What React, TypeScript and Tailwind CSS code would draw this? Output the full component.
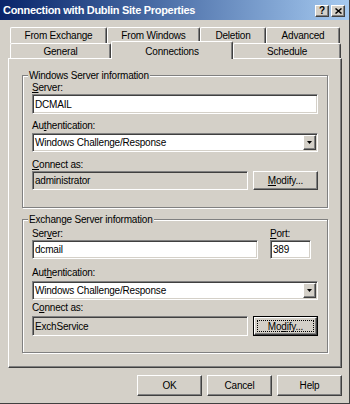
import React from "react";

const sunken =
  "border border-t-[#808080] border-l-[#808080] border-r-white border-b-white shadow-[inset_1px_1px_0_#404040,inset_-1px_-1px_0_#d4d0c8]";
const raised =
  "border border-t-white border-l-white border-r-[#404040] border-b-[#404040] shadow-[inset_-1px_-1px_0_#808080]";

function Acc({ text, at }: { text: string; at: number }) {
  return (
    <>
      {text.slice(0, at)}
      <span className="underline underline-offset-[1px]">{text[at]}</span>
      {text.slice(at + 1)}
    </>
  );
}

function Label({ children }: { children: React.ReactNode }) {
  return <div className="h-[13px] leading-[13px] whitespace-nowrap">{children}</div>;
}

function TextBox({ value, className }: { value: string; className: string }) {
  return (
    <div className={`${sunken} bg-white flex items-center pl-[2px] ${className}`}>
      {value}
    </div>
  );
}

function Combo({ className }: { className: string }) {
  return (
    <div className={`${sunken} bg-white flex items-center pl-[2px] pr-[1px] ${className}`}>
      <span className="flex-1">Windows Challenge/Response</span>
      <div className={`${raised} bg-[#d4d0c8] w-[13px] h-[15px] flex items-center justify-center`}>
        <svg width="5" height="3" viewBox="0 0 5 3">
          <path d="M0 0h5L2.5 3z" fill="#000" />
        </svg>
      </div>
    </div>
  );
}

function Button({ children, className }: { children: React.ReactNode; className: string }) {
  return (
    <div className={`${raised} bg-[#d4d0c8] flex items-center justify-center ${className}`}>
      {children}
    </div>
  );
}

function GroupBox({
  title,
  className,
  children,
}: {
  title: string;
  className: string;
  children: React.ReactNode;
}) {
  return (
    <div
      className={`relative border border-[#808080] shadow-[inset_1px_1px_0_white,1px_1px_0_white] px-[9px] ${className}`}
    >
      <span className="absolute -top-[7px] left-[5px] bg-[#d4d0c8] px-[1px] leading-[13px]">
        {title}
      </span>
      {children}
    </div>
  );
}

function Tab({ label, w }: { label: string; w: string }) {
  return (
    <div
      className={`${w} h-full border-t border-l border-white border-r border-r-[#404040] shadow-[inset_-1px_0_0_#808080] rounded-t-[2px] flex items-center justify-center`}
    >
      {label}
    </div>
  );
}

export default function App() {
  return (
    <div className="w-[350px] h-[404px] bg-[#d4d0c8] border-r border-b border-[#404040] overflow-hidden text-black font-['Liberation_Sans',Arial,sans-serif] text-[10px] tracking-[-0.2px]">
      {/* Title bar */}
      <div className="h-[20px] flex items-center bg-gradient-to-r from-[#0a246a] to-[#a6caf0] pl-[3px] pr-[4px]">
        <span className="flex-1 text-white font-bold text-[11px] tracking-[-0.3px]">
          Connection with Dublin Site Properties
        </span>
        <div className="flex gap-[2px] mt-[2px]">
          <div className={`${raised} bg-[#d4d0c8] w-[14px] h-[12px] flex items-center justify-center font-bold text-[10px] leading-none`}>
            ?
          </div>
          <div className={`${raised} bg-[#d4d0c8] w-[14px] h-[12px] flex items-center justify-center`}>
            <svg width="7" height="6" viewBox="0 0 7 6">
              <path d="M0.5 0.5l6 5M6.5 0.5l-6 5" stroke="#000" strokeWidth="1.5" />
            </svg>
          </div>
        </div>
      </div>

      <div className="pl-[8px] pt-[7px]">
        {/* Tabs, back row */}
        <div className="flex pl-[2px] h-[16px]">
          <Tab label="From Exchange" w="w-[97px]" />
          <Tab label="From Windows" w="w-[93px]" />
          <Tab label="Deletion" w="w-[66px]" />
          <Tab label="Advanced" w="w-[74px]" />
        </div>
        {/* Tabs, front row */}
        <div className="flex items-end pl-[2px] h-[15px]">
          <Tab label="General" w="w-[101px]" />
          <div className="relative z-10 w-[122px] h-[18px] -mb-[1px] bg-[#d4d0c8] border-t border-l border-white border-r border-r-[#404040] shadow-[inset_-1px_0_0_#808080] rounded-t-[2px] flex items-start justify-center pt-[2px]">
            Connections
          </div>
          <Tab label="Schedule" w="w-[108px]" />
        </div>

        {/* Tab page */}
        <div className={`${raised} w-[334px] h-[310px] px-[13px] pt-[16px]`}>
          <GroupBox title="Windows Server information" className="pt-[5px] pb-[17px]">
            <Label>
              <Acc text="Server:" at={0} />
            </Label>
            <TextBox value="DCMAIL" className="h-[20px]" />
            <div className="mt-[5px]">
              <Label>
                <Acc text="Authentication:" at={2} />
              </Label>
            </div>
            <Combo className="mt-[1px] h-[19px]" />
            <div className="mt-[6px]">
              <Label>
                <Acc text="Connect as:" at={0} />
              </Label>
            </div>
            <div className="flex justify-between h-[19px]">
              <div className={`${sunken} w-[216px] flex items-center pl-[2px]`}>administrator</div>
              <Button className="w-[65px]">
                <Acc text="Modify..." at={0} />
              </Button>
            </div>
          </GroupBox>

          <GroupBox title="Exchange Server information" className="mt-[11px] pt-[7px] pb-[16px]">
            <div className="flex gap-[12px]">
              <div className="w-[226px]">
                <Label>
                  <Acc text="Server:" at={3} />
                </Label>
                <TextBox value="dcmail" className="h-[19px]" />
              </div>
              <div className="w-[41px]">
                <Label>
                  <Acc text="Port:" at={0} />
                </Label>
                <TextBox value="389" className="h-[19px]" />
              </div>
            </div>
            <div className="mt-[7px]">
              <Label>
                <Acc text="Authentication:" at={3} />
              </Label>
            </div>
            <Combo className="mt-[2px] h-[19px]" />
            <div className="mt-[1px]">
              <Label>
                <Acc text="Connect as:" at={1} />
              </Label>
            </div>
            <div className="flex justify-between h-[20px] mt-[2px]">
              <div className={`${sunken} w-[216px] flex items-center pl-[2px]`}>ExchService</div>
              <div className="w-[65px] border border-black flex">
                <div className={`${raised} flex-1 flex p-[2px]`}>
                  <div className="flex-1 border border-dotted border-black flex items-center justify-center">
                    <Acc text="Modify..." at={2} />
                  </div>
                </div>
              </div>
            </div>
          </GroupBox>
        </div>

        {/* Dialog buttons */}
        <div className="w-[334px] flex justify-end gap-[5px] mt-[7px]">
          <Button className="w-[65px] h-[21px]">OK</Button>
          <Button className="w-[65px] h-[21px]">Cancel</Button>
          <Button className="w-[65px] h-[21px]">Help</Button>
        </div>
      </div>
    </div>
  );
}
